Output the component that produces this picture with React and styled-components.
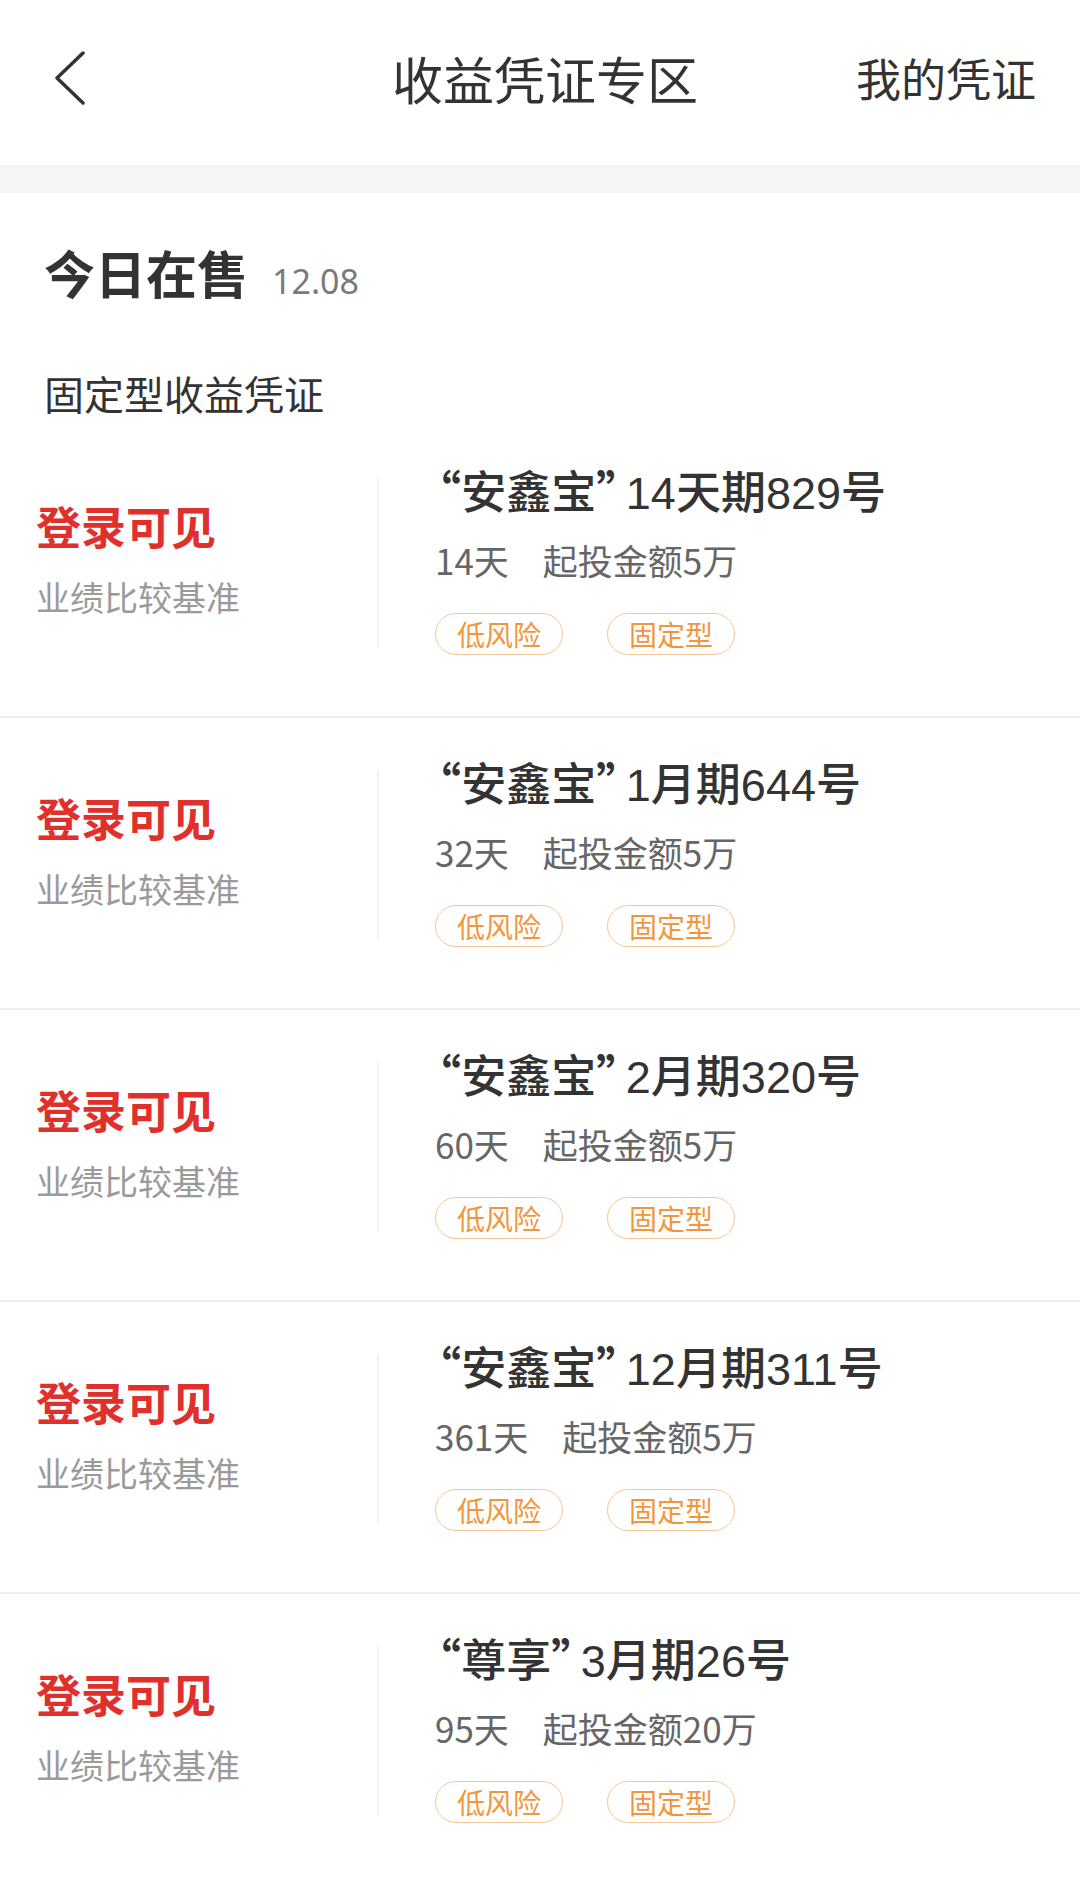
import React from 'react';
import styled, { createGlobalStyle } from 'styled-components';

const GlobalStyle = createGlobalStyle`
  html, body {
    margin: 0;
    padding: 0;
    background: #fff;
  }
  body {
    font-family: "Noto Sans CJK SC", "Noto Sans", sans-serif;
    color: #333;
  }
`;

const Page = styled.div`
  width: 1080px;
  min-height: 1884px;
  background: #fff;
  overflow: hidden;
`;

const NavBar = styled.header`
  height: 165px;
  display: grid;
  grid-template-columns: 1fr auto 1fr;
  align-items: center;
  padding: 0 44px 10px 54px;
  box-sizing: border-box;
`;

const BackBtn = styled.div`
  width: 40px;
  height: 60px;
  display: flex;
  align-items: center;
  color: #333;
`;

const NavTitle = styled.h1`
  margin: 0;
  font-size: 51px;
  font-weight: 400;
  color: #333;
  line-height: 60px;
`;

const NavAction = styled.div`
  justify-self: end;
  font-size: 45px;
  color: #333;
  line-height: 60px;
`;

const Band = styled.div`
  height: 28px;
  background: #f5f5f5;
`;

const DayHeader = styled.div`
  display: flex;
  align-items: baseline;
  gap: 24px;
  padding: 49px 0 0 44px;
  height: 60px;
`;

const DayTitle = styled.h2`
  margin: 0;
  font-size: 51px;
  font-weight: 700;
  color: #333;
  line-height: 60px;
`;

const DayDate = styled.span`
  font-size: 34px;
  color: #7a7a7a;
  font-family: "Noto Sans", "Noto Sans CJK SC", sans-serif;
`;

const Category = styled.div`
  margin: 67px 0 0 44px;
  font-size: 40px;
  line-height: 48px;
  color: #333;
  padding-bottom: 9px;
`;

const Row = styled.div`
  height: 290px;
  display: grid;
  grid-template-columns: 341px 2px 1fr;
  align-items: start;
  padding-left: 36px;
  border-bottom: 2px solid #efefef;
`;

const RateBox = styled.div`
  padding-top: 72px;
  display: flex;
  flex-direction: column;
`;

const Rate = styled.div`
  font-size: 45px;
  line-height: 56px;
  font-weight: 700;
  color: #e0302c;
`;

const RateLabel = styled.div`
  margin-top: 22px;
  font-size: 34px;
  line-height: 42px;
  color: #9a9a9a;
`;

const Divider = styled.div`
  margin-top: 52px;
  height: 170px;
  background: #f3f3f3;
`;

const Info = styled.div`
  padding: 36px 0 0 56px;
  display: flex;
  flex-direction: column;
`;

const Name = styled.div`
  font-family: "Liberation Sans", "Noto Sans CJK SC", sans-serif;
  font-size: 45px;
  line-height: 56px;
  height: 56px;
  font-weight: 500;
  color: #333;
  white-space: nowrap;
`;

const OpenQuote = styled.span`
  font-family: "Noto Sans CJK SC", sans-serif;
  font-weight: 700;
  margin-left: -0.42em;
`;

const CloseQuote = styled.span`
  font-family: "Noto Sans CJK SC", sans-serif;
  font-weight: 700;
  letter-spacing: -0.34em;
`;

const Meta = styled.div`
  margin-top: 20px;
  font-size: 35px;
  line-height: 44px;
  color: #666;
  display: flex;
  gap: 34px;
`;

const Tags = styled.div`
  margin-top: 31px;
  display: flex;
  gap: 44px;
`;

const Tag = styled.span`
  height: 42px;
  box-sizing: border-box;
  padding: 0 21px;
  display: inline-flex;
  align-items: center;
  border: 1.5px solid #f6c796;
  border-radius: 21px;
  font-size: 28px;
  color: #f2963e;
`;

const products = [
  { brand: '安鑫宝', term: '14天期829号', days: '14天', min: '起投金额5万' },
  { brand: '安鑫宝', term: '1月期644号', days: '32天', min: '起投金额5万' },
  { brand: '安鑫宝', term: '2月期320号', days: '60天', min: '起投金额5万' },
  { brand: '安鑫宝', term: '12月期311号', days: '361天', min: '起投金额5万' },
  { brand: '尊享', term: '3月期26号', days: '95天', min: '起投金额20万' },
];

export default function App() {
  return (
    <Page>
      <GlobalStyle />
      <NavBar>
        <BackBtn>
          <svg width="32" height="54" viewBox="0 0 32 54" fill="none">
            <path d="M29 2 L3 27 L29 52" stroke="currentColor" strokeWidth="3.5" strokeLinecap="round" strokeLinejoin="round" />
          </svg>
        </BackBtn>
        <NavTitle>收益凭证专区</NavTitle>
        <NavAction>我的凭证</NavAction>
      </NavBar>
      <Band />

      <DayHeader>
        <DayTitle>今日在售</DayTitle>
        <DayDate>12.08</DayDate>
      </DayHeader>
      <Category>固定型收益凭证</Category>

      {products.map(p => (
        <Row key={p.term}>
          <RateBox>
            <Rate>登录可见</Rate>
            <RateLabel>业绩比较基准</RateLabel>
          </RateBox>
          <Divider />
          <Info>
            <Name>
              <OpenQuote>“</OpenQuote>{p.brand}<CloseQuote>”</CloseQuote>{p.term}
            </Name>
            <Meta>
              <span>{p.days}</span>
              <span>{p.min}</span>
            </Meta>
            <Tags>
              <Tag>低风险</Tag>
              <Tag>固定型</Tag>
            </Tags>
          </Info>
        </Row>
      ))}
    </Page>
  );
}
